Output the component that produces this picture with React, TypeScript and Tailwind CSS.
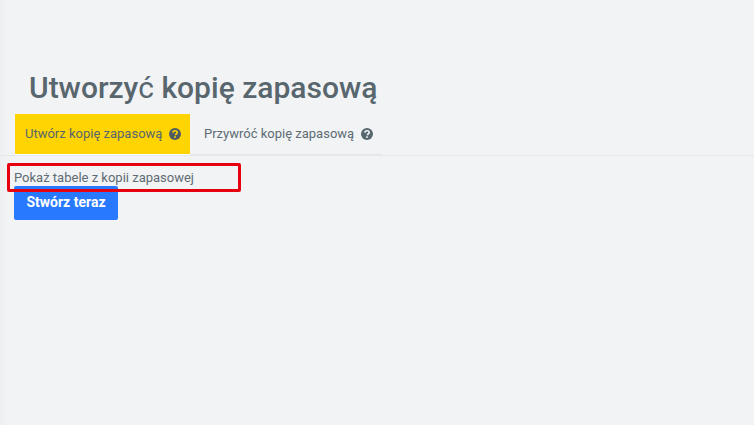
function HelpIcon({ color, hole }: { color: string; hole: string }) {
  return (
    <svg viewBox="0 0 16 16" className="h-[12px] w-[12px] shrink-0" aria-hidden>
      <circle cx="8" cy="8" r="8" fill={color} />
      <path d="M5.2 6.2c.1-1.6 1.3-2.5 2.9-2.5 1.6 0 2.8.9 2.8 2.3 0 1.1-.7 1.6-1.4 2.1-.5.3-.8.6-.8 1.2v.4" fill="none" stroke={hole} strokeWidth="2.2" />
      <rect x="6.9" y="11" width="2.2" height="2.2" fill={hole} />
    </svg>
  )
}

export default function App() {
  return (
    <div className="h-[425px] w-[754px] overflow-hidden bg-[#f1f3f5] font-['Roboto',sans-serif]">
      <div className="relative h-full bg-[linear-gradient(90deg,#eeeff1_0px,#f1f3f5_8px)] pt-[70px]">
        <h1 className="pl-[29px] text-[30px] font-medium leading-[36px] text-[#58666e]">
          Utworzy<span className="font-normal">ć</span> kopię zapasową
        </h1>

        <div className="mt-[8px] flex h-[42px] border-b border-[#e3e8ec] pl-[15px]">
          <div className="flex w-[175px] items-center gap-[7px] border-b border-white bg-[#ffd400] bg-clip-padding pl-[10px] text-[13px] text-[#58666e]">
            Utwórz kopię zapasową
            <HelpIcon color="#4f5b60" hole="#ffd400" />
          </div>
          <div className="flex w-[192px] items-center gap-[7px] border-b border-[#e3e8ec] pb-px pl-[14px] text-[13px] text-[#5e6b73]">
            Przywróć kopię zapasową
            <HelpIcon color="#58666e" hole="#f1f3f5" />
          </div>
        </div>

        <div className="pl-[14px] pt-[14px]">
          <p className="text-[13px] leading-[16px] text-[#5e6b73]">Pokaż tabele z kopii zapasowej</p>
          <button className="flex h-[34px] w-[104px] items-center justify-center rounded-[2px] bg-[#2979ff] pb-[2px] text-[14px] font-bold text-white">
            Stwórz teraz
          </button>
        </div>

        <div className="absolute left-[7px] top-[163px] h-[29px] w-[234px] rounded-[2px] border-[3px] border-[#e6000f]" />
      </div>
    </div>
  )
}
